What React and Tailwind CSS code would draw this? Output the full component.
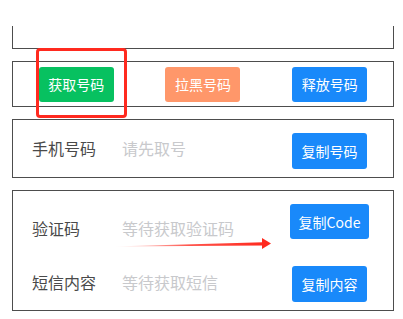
const font = { fontFamily: '"Noto Sans CJK SC", "Noto Sans", sans-serif' };

function Btn({ color, w = 'w-[75px]', h = 'h-9', children }) {
  return (
    <div className={`${w} ${h} ${color} rounded-[3px] flex items-center justify-center text-white text-[14px] leading-none`}>
      {children}
    </div>
  );
}

function Row({ label, hint, children, labelTop, btnTop, h }) {
  return (
    <div className={`flex items-start ${h}`}>
      <div className={`w-[109px] shrink-0 pl-[19px] h-6 leading-6 text-[16px] text-[#4a4a4a] ${labelTop}`}>{label}</div>
      <div className={`flex-1 h-6 leading-6 text-[16px] text-[#c8c9cc] ${labelTop}`}>{hint}</div>
      <div className={`w-[101px] mr-[13px] flex justify-center ${btnTop}`}>{children}</div>
    </div>
  );
}

export default function App() {
  return (
    <div className="relative w-[403px] h-[319px] bg-white overflow-hidden" style={font}>
      <div className="ml-3 w-[382px] mt-[26px] h-[23px] border-x border-b border-[#4d4d4d]" />

      <div className="ml-3 w-[382px] mt-3 h-[46px] border border-[#4d4d4d] flex items-center justify-around">
        <Btn color="bg-[#07c160]" h="h-[35px]">获取号码</Btn>
        <Btn color="bg-[#ff976a]" h="h-[35px]">拉黑号码</Btn>
        <Btn color="bg-[#1989fa]" h="h-[35px]">释放号码</Btn>
      </div>

      <div className="ml-3 w-[382px] mt-3 h-[59px] border border-[#4d4d4d]">
        <Row label="手机号码" hint="请先取号" labelTop="mt-[16px]" btnTop="mt-[13px]">
          <Btn color="bg-[#1989fa]">复制号码</Btn>
        </Row>
      </div>

      <div className="ml-3 w-[382px] mt-3 h-[121px] border border-[#4d4d4d]">
        <Row label="验证码" hint="等待获取验证码" labelTop="mt-[25px]" btnTop="mt-[13px]" h="h-[65px]">
          <Btn color="bg-[#1989fa]" w="w-[79px]" h="h-[35px]">复制Code</Btn>
        </Row>
        <Row label="短信内容" hint="等待获取短信" labelTop="mt-[14px]" btnTop="mt-[10px]">
          <Btn color="bg-[#1989fa]">复制内容</Btn>
        </Row>
      </div>

      <div className="absolute left-[36px] top-[48px] w-[91px] h-[70px] border-[3px] border-[#ff2a1f] rounded-[4px]" />

      <svg className="absolute left-0 top-0" width="403" height="319" viewBox="0 0 403 319">
        <defs>
          <linearGradient id="ar" x1="113" y1="0" x2="265" y2="0" gradientUnits="userSpaceOnUse">
            <stop offset="0" stopColor="#ff2a1f" stopOpacity="0" />
            <stop offset="0.5" stopColor="#ff2a1f" stopOpacity="0.8" />
            <stop offset="1" stopColor="#ff2a1f" />
          </linearGradient>
        </defs>
        <polygon points="113,246.5 263,242.2 263,245.4" fill="url(#ar)" />
        <polygon points="262,238 271,243.6 262,249" fill="#ff2a1f" />
      </svg>
    </div>
  );
}
